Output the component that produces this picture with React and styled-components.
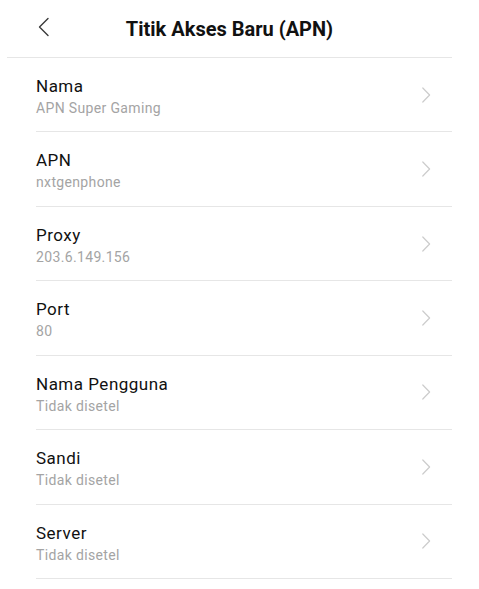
import React from "react";
import styled, { createGlobalStyle } from "styled-components";

const Global = createGlobalStyle`
  html, body { margin: 0; padding: 0; background: #ffffff; }
  body { font-family: Roboto, "Noto Sans", "Liberation Sans", sans-serif; -webkit-font-smoothing: antialiased; }
`;

const Page = styled.div`
  width: 479px;
  min-height: 589px;
  background: #ffffff;
  display: flex;
  flex-direction: column;
`;

const Header = styled.header`
  margin: 0 27px 0 7px;
  height: 57px;
  border-bottom: 1px solid #e6e6e6;
  display: grid;
  grid-template-columns: 1fr auto 1fr;
  align-items: center;
`;

const BackButton = styled.button`
  justify-self: start;
  margin-left: 28px;
  margin-top: -3px;
  width: 16px;
  height: 22px;
  padding: 0;
  border: none;
  background: none;
  display: flex;
  align-items: center;
  justify-content: center;
  cursor: pointer;
`;

const Title = styled.h1`
  margin: 0;
  font-size: 20px;
  line-height: 24px;
  font-weight: 700;
  color: #111111;
`;

const List = styled.div`
  margin: 0 27px 0 36px;
  display: flex;
  flex-direction: column;
`;

const Row = styled.div`
  box-sizing: border-box;
  height: 74.43px;
  border-bottom: 1px solid #e6e6e6;
  display: flex;
  align-items: center;
`;

const TextBlock = styled.div`
  flex: 1;
  align-self: flex-start;
  padding-top: 18px;
  display: flex;
  flex-direction: column;
  gap: 3px;
`;

const Label = styled.div`
  font-size: 17px;
  line-height: 20px;
  color: #111111;
  letter-spacing: 0.5px;
`;

const Value = styled.div`
  font-size: 14px;
  line-height: 18px;
  color: #a4a4a4;
  letter-spacing: 0.35px;
`;

const Chevron = styled.svg`
  flex: none;
  margin-right: 21px;
  width: 10px;
  height: 16px;
`;

const items = [
  ["Nama", "APN Super Gaming"],
  ["APN", "nxtgenphone"],
  ["Proxy", "203.6.149.156"],
  ["Port", "80"],
  ["Nama Pengguna", "Tidak disetel"],
  ["Sandi", "Tidak disetel"],
  ["Server", "Tidak disetel"],
];

export default function App() {
  return (
    <Page>
      <Global />
      <Header>
        <BackButton aria-label="Kembali">
          <svg width="13" height="20" viewBox="0 0 13 20">
            <path d="M11 1.5 L2.5 10 L11 18.5" fill="none" stroke="#3a3a3a" strokeWidth="1.4" strokeLinecap="round" strokeLinejoin="round" />
          </svg>
        </BackButton>
        <Title>Titik Akses Baru (APN)</Title>
        <div />
      </Header>
      <List>
        {items.map(([label, value]) => (
          <Row key={label}>
            <TextBlock>
              <Label>{label}</Label>
              <Value>{value}</Value>
            </TextBlock>
            <Chevron viewBox="0 0 10 16">
              <path d="M1.8 1 L8.6 8 L1.8 15" fill="none" stroke="#cccccc" strokeWidth="1.2" strokeLinecap="round" strokeLinejoin="round" />
            </Chevron>
          </Row>
        ))}
      </List>
    </Page>
  );
}
